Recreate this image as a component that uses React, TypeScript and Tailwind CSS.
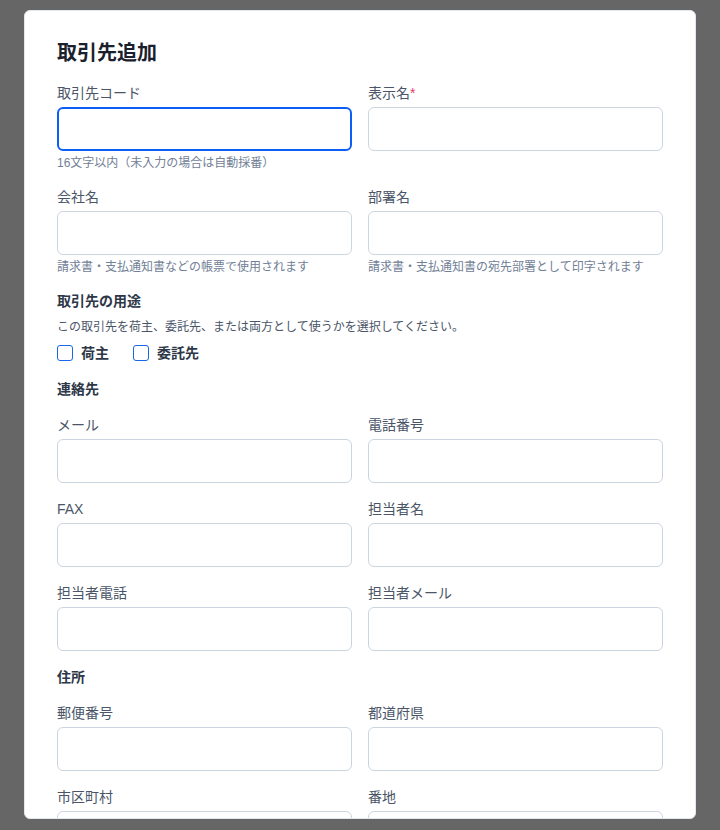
import React from "react";

const font = { fontFamily: '"Liberation Sans", "Noto Sans CJK JP", sans-serif' };

function Field({
  label,
  required,
  hint,
  focused,
}: {
  label: string;
  required?: boolean;
  hint?: string;
  focused?: boolean;
}) {
  return (
    <div className="flex flex-col">
      <label className="mb-1 text-sm leading-5 text-[#4a5568]">
        {label}
        {required && <span className="text-[#e53e6b]">*</span>}
      </label>
      <div
        className={
          focused
            ? "h-11 rounded-md border-2 border-[#0d5ef5] bg-white"
            : "h-11 rounded-md border border-[#cbd5e0] bg-white"
        }
      />
      {hint && <p className="mt-1 text-xs leading-4 text-[#718096]">{hint}</p>}
    </div>
  );
}

function Check({ label }: { label: string }) {
  return (
    <label className="flex items-center gap-2">
      <span className="h-4 w-4 rounded-[3px] border border-[#1a66e8] bg-white" />
      <span className="text-sm font-bold leading-5 text-[#2d3748]">{label}</span>
    </label>
  );
}

export default function App() {
  return (
    <div className="h-[830px] w-[720px] overflow-hidden bg-[#666666]" style={font}>
      <div className="mx-auto mt-2.5 h-[809px] w-[672px] overflow-hidden rounded-md border border-[#e2e8f0] bg-white px-8 pt-7">
        <h2 className="mb-4 text-xl font-bold leading-7 text-[#1a202c]">取引先追加</h2>
        <div className="flex flex-col gap-4">
          <div className="grid grid-cols-2 gap-x-4 gap-y-4">
            <Field label="取引先コード" hint="16文字以内（未入力の場合は自動採番）" focused />
            <Field label="表示名" required />
            <Field label="会社名" hint="請求書・支払通知書などの帳票で使用されます" />
            <Field label="部署名" hint="請求書・支払通知書の宛先部署として印字されます" />
          </div>
          <div className="flex flex-col">
            <h3 className="text-sm font-bold leading-5 text-[#2d3748]">取引先の用途</h3>
            <p className="mt-2 text-xs leading-4 text-[#4a5568]">
              この取引先を荷主、委託先、または両方として使うかを選択してください。
            </p>
            <div className="mt-2 flex items-center gap-6">
              <Check label="荷主" />
              <Check label="委託先" />
            </div>
          </div>
          <h3 className="text-sm font-bold leading-5 text-[#2d3748]">連絡先</h3>
          <div className="grid grid-cols-2 gap-x-4 gap-y-4">
            <Field label="メール" />
            <Field label="電話番号" />
            <Field label="FAX" />
            <Field label="担当者名" />
            <Field label="担当者電話" />
            <Field label="担当者メール" />
          </div>
          <h3 className="text-sm font-bold leading-5 text-[#2d3748]">住所</h3>
          <div className="grid grid-cols-2 gap-x-4 gap-y-4">
            <Field label="郵便番号" />
            <Field label="都道府県" />
            <Field label="市区町村" />
            <Field label="番地" />
          </div>
        </div>
      </div>
    </div>
  );
}
